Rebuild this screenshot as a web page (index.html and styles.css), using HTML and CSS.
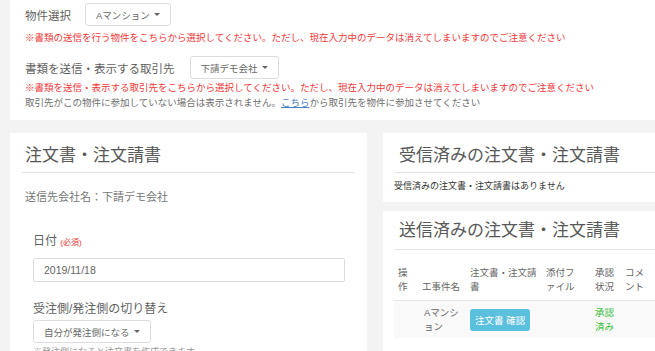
FILE: index.html
```html
<!DOCTYPE html>
<html lang="ja">
<head>
    <meta charset="UTF-8">
    <meta name="viewport" content="width=device-width, initial-scale=1.0">
    <title>注文書・注文請書</title>
    <link rel="stylesheet" href="styles.css">
</head>
<body>

    <!-- 物件・取引先の選択 -->
    <div class="filter-panel">
        <div class="filter-row">
            <span class="filter-label">物件選択</span>
            <button class="dropdown">Aマンション <span class="caret"></span></button>
        </div>
        <p class="note note-red note-first">※書類の送信を行う物件をこちらから選択してください。ただし、現在入力中のデータは消えてしまいますのでご注意ください</p>

        <div class="filter-row row-partner">
            <span class="filter-label">書類を送信・表示する取引先</span>
            <button class="dropdown">下請デモ会社 <span class="caret"></span></button>
        </div>
        <p class="note note-red note-tight">※書類を送信・表示する取引先をこちらから選択してください。ただし、現在入力中のデータは消えてしまいますのでご注意ください</p>
        <p class="note">取引先がこの物件に参加していない場合は表示されません。<a href="#">こちら</a>から取引先を物件に参加させてください</p>
    </div>

    <div class="main">
        <!-- 作成フォーム -->
        <div class="card card-form">
            <h2 class="card-title">注文書・注文請書</h2>
            <p class="company">送信先会社名：下請デモ会社</p>

            <div class="form-group">
                <label class="form-label">日付 <span class="required">(必須)</span></label>
                <input type="text" class="input-field" value="2019/11/18">
            </div>

            <div class="form-group group-switch">
                <label class="form-label">受注側/発注側の切り替え</label>
                <button class="dropdown">自分が発注側になる <span class="caret"></span></button>
                <p class="help">※発注側になると注文書を作成できます</p>
            </div>
        </div>

        <div class="side">
            <!-- 受信済み -->
            <div class="card card-side">
                <h2 class="card-title">受信済みの注文書・注文請書</h2>
                <p class="empty">受信済みの注文書・注文請書はありません</p>
            </div>

            <!-- 送信済み -->
            <div class="card card-side card-sent">
                <h2 class="card-title">送信済みの注文書・注文請書</h2>
                <table class="doc-table">
                    <colgroup>
                        <col style="width: 24px">
                        <col style="width: 48px">
                        <col style="width: 76px">
                        <col style="width: 49px">
                        <col style="width: 30px">
                        <col style="width: 32px">
                        <col>
                    </colgroup>
                    <thead>
                        <tr>
                            <th>操作</th>
                            <th>工事件名</th>
                            <th>注文書・注文請書</th>
                            <th class="th-file">添付ファイル</th>
                            <th>承認状況</th>
                            <th>コメント</th>
                            <th></th>
                        </tr>
                    </thead>
                    <tbody>
                        <tr>
                            <td></td>
                            <td><span class="site-name">Aマンション</span></td>
                            <td><button class="btn-info">注文書 確認</button></td>
                            <td></td>
                            <td class="status-ok">承認済み</td>
                            <td></td>
                            <td></td>
                        </tr>
                    </tbody>
                </table>
            </div>
        </div>
    </div>

</body>
</html>
```

FILE: styles.css
```css
html, body {
    margin: 0;
    background-color: #f3f3f3;
    overflow: hidden;
}

body {
    font-family: "Liberation Sans", "Noto Sans CJK JP", sans-serif;
    color: #666;
}

p {
    margin: 0;
}

.filter-panel {
    margin-left: 10px;
    background-color: #fff;
    padding: 3px 15px 10px;
}

.filter-row {
    display: flex;
    align-items: center;
    gap: 14px;
}

.row-partner {
    margin-top: 11px;
    gap: 15px;
}

.filter-label {
    font-size: 11.5px;
    color: #5f5f5f;
}

.dropdown {
    display: inline-flex;
    align-items: center;
    gap: 4px;
    height: 23px;
    padding: 0 10px;
    background-color: #fff;
    border: 1px solid #ddd;
    border-radius: 3px;
    font-family: inherit;
    font-size: 9.5px;
    color: #666;
    cursor: pointer;
}

.caret {
    display: inline-block;
    width: 0;
    height: 0;
    border-top: 3px solid #666;
    border-left: 3px solid transparent;
    border-right: 3px solid transparent;
}

.note {
    font-size: 9.5px;
    line-height: 15px;
    color: #707070;
    white-space: nowrap;
}

.note a {
    color: #4a7fc1;
    text-decoration: underline;
}

.note-red {
    color: #f03a3a;
}

.note-first {
    margin-top: 4px;
}

.note-tight {
    margin-top: 1px;
}

.main {
    display: flex;
    align-items: flex-start;
    gap: 16px;
    padding: 13px 0 0 10px;
}

.card {
    flex-shrink: 0;
    background-color: #fff;
}

.card-title {
    margin: 0;
    font-size: 17px;
    font-weight: normal;
    line-height: 20px;
    color: #585858;
    border-bottom: 1px solid #e6e6e6;
}

.card-form {
    width: 357px;
    padding: 13px 12px 60px;
    box-sizing: border-box;
}

.card-form .card-title {
    padding: 0 3px 6px;
}

.company {
    margin-top: 16px;
    padding-left: 3px;
    font-size: 11px;
    line-height: 16px;
    color: #777;
}

.form-group {
    margin-top: 28px;
    padding-left: 11px;
}

.group-switch {
    margin-top: 19px;
}

.form-label {
    display: block;
    margin-bottom: 7px;
    font-size: 12px;
    line-height: 16px;
    color: #5f5f5f;
}

.group-switch .form-label {
    margin-bottom: 3px;
}

.required {
    font-size: 8px;
    color: #f03a3a;
}

.input-field {
    display: block;
    width: 312px;
    height: 24px;
    box-sizing: border-box;
    padding: 0 10px;
    border: 1px solid #ddd;
    border-radius: 2px;
    font-family: inherit;
    font-size: 10.5px;
    color: #666;
}

.help {
    margin-top: 3px;
    font-size: 9px;
    line-height: 12px;
    color: #999;
    white-space: nowrap;
}

.side {
    display: flex;
    flex-direction: column;
    gap: 9px;
    flex-shrink: 0;
    width: 357px;
}

.card-side {
    padding: 13px 11px 10px;
}

.card-side .card-title {
    padding: 0 5px 6px;
}

.empty {
    margin-top: 7px;
    font-size: 9px;
    line-height: 12px;
    color: #333;
}

.card-sent {
    padding-top: 10px;
    padding-bottom: 40px;
}

.card-sent .card-title {
    padding-bottom: 8px;
}

.doc-table {
    width: 100%;
    margin-top: 12px;
    table-layout: fixed;
    border-collapse: collapse;
    font-size: 9.5px;
    color: #666;
}

.doc-table th {
    padding: 4px 4px 6px;
    font-weight: normal;
    line-height: 14px;
    text-align: left;
    vertical-align: bottom;
    border-bottom: 1px solid #e6e6e6;
}

.doc-table th.th-file {
    padding-right: 11px;
}

.doc-table td {
    padding: 4px 4px;
    height: 29px;
    line-height: 14px;
    vertical-align: middle;
    background-color: #f9f9f9;
}

.site-name {
    display: block;
    width: 38px;
    padding-left: 2px;
    word-break: break-all;
    line-break: anywhere;
}

.btn-info {
    height: 22px;
    padding: 0 5px;
    background-color: #5bc0de;
    color: white;
    border: none;
    border-radius: 3px;
    font-family: inherit;
    font-size: 9.5px;
    white-space: nowrap;
    cursor: pointer;
}

.status-ok {
    color: #3cbf3c;
}
```
